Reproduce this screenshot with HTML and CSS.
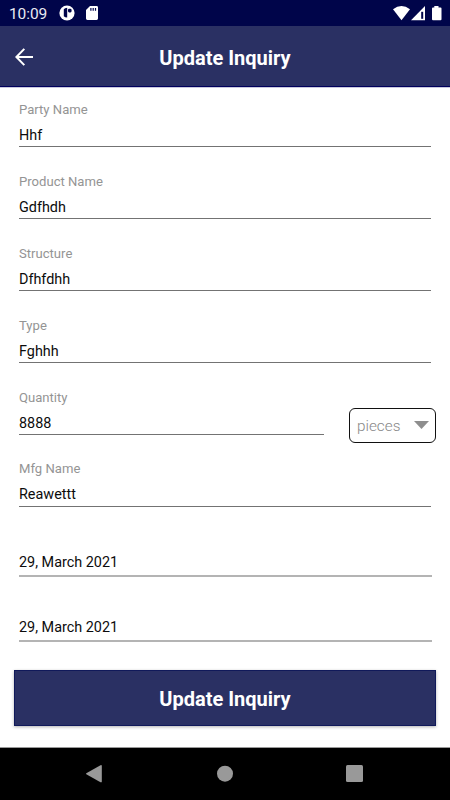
FILE: index.html
```html
<!DOCTYPE html>
<html lang="en">
<head>
<meta charset="utf-8">
<title>Update Inquiry</title>
<link rel="stylesheet" href="styles.css">
</head>
<body>
<div class="status">
  <span class="clock">10:09</span>
  <svg class="app-icon" width="16" height="16" viewBox="0 0 16 16"><circle cx="8" cy="8" r="7.6" fill="#fff"/><path d="M4.800 4.200q1-1.300 3.400-1.500v9.800q-2.200 0-3.400-1.300z" fill="#00054a"/><rect x="9" y="3.800" width="3.600" height="3.600" rx="1.300" fill="#00054a"/></svg>
  <svg class="sd-icon" width="12" height="14" viewBox="0 0 12 14"><path d="M4 0h6.600Q12 0 12 1.400v11.200q0 1.400-1.400 1.400H1.400Q0 14 0 12.600V4z" fill="#fff"/><path d="M4.300 2h1.200v2.700H4.300zM6.600 2h1.200v2.700H6.600zM8.900 2h1.200v2.700H8.900z" fill="#00054a"/></svg>
  <svg class="signals" width="50" height="15" viewBox="0 0 50 15"><path d="M0 3.300Q8.500-3.300 17 3.300L8.500 14.200z" fill="#fff"/><path d="M18 14.200 32 0v14.200z" fill="#fff"/><path d="M28.200 5.800h2v7h-2z" fill="#00054a"/><path d="M41.300 0h4.200v1.400h2q1 0 1 1v10.800q0 1-1 1h-7.500q-1 0-1-1V2.400q0-1 1-1h1.300z" fill="#fff"/></svg>
</div>
<header class="header">
  <svg class="back" width="18" height="18" viewBox="0 0 18 18"><path d="M9.300.9 1.400 9l7.900 8.100M1.400 9H18" fill="none" stroke="#fff" stroke-width="2"/></svg>
  <h1 class="title">Update Inquiry</h1>
</header>
<main class="form">
  <div class="field"><div class="label">Party Name</div><div class="value">Hhf</div></div>
  <div class="field"><div class="label">Product Name</div><div class="value">Gdfhdh</div></div>
  <div class="field"><div class="label">Structure</div><div class="value">Dfhfdhh</div></div>
  <div class="field"><div class="label">Type</div><div class="value">Fghhh</div></div>
  <div class="row">
    <div class="field quantity"><div class="label">Quantity</div><div class="value">8888</div></div>
    <div class="unit"><span>pieces</span><svg width="15" height="8" viewBox="0 0 15 8"><path d="M0 0h15L7.500 8z" fill="#8e8e8e"/></svg></div>
  </div>
  <div class="field"><div class="label">Mfg Name</div><div class="value">Reawettt</div></div>
  <div class="date first">29, March 2021</div>
  <div class="date">29, March 2021</div>
  <div class="submit">Update Inquiry</div>
</main>
<nav class="nav">
  <svg width="450" height="52" viewBox="0 0 450 52" fill="#999"><path d="M86.300 25.200 100.500 17.200q1.300-.5 1.300.8v15.400q0 1.300-1.300.8L86.300 26.200q-.6-.5 0-1z"/><circle cx="225" cy="25.700" r="8"/><rect x="346" y="17" width="17" height="17" rx="1.500"/></svg>
</nav>
</body>
</html>
```
FILE: styles.css
```css
* {
  box-sizing: border-box;
}

body {
  margin: 0;
  width: 450px;
  height: 800px;
  display: flex;
  flex-direction: column;
  overflow: hidden;
  background: #fff;
  color: #0c0c0c;
  font-family: Roboto, "Liberation Sans", sans-serif;
}

.status {
  height: 26px;
  flex: none;
  display: flex;
  align-items: center;
  padding: 0 7px 0 9px;
  background: #00054a;
}

.clock {
  width: 50px;
  color: #e9eaf2;
  font-size: 15.500px;
  letter-spacing: -.1px;
  line-height: 20px;
  padding-top: 2px;
}

.sd-icon {
  margin-left: 11px;
}

.signals {
  margin-left: auto;
}

.header {
  height: 61px;
  flex: none;
  display: grid;
  grid-template-columns: 45px 1fr 45px;
  align-items: center;
  background: #2a3063;
  border-bottom: 1px solid #00005c;
  box-shadow: 0 1px 0 #c9c9dd;
}

.back {
  margin: 2px 0 0 15px;
}

.title {
  margin: 3px 0 0;
  color: #fff;
  font-size: 20px;
  font-weight: 700;
  line-height: 24px;
  text-align: center;
}

.form {
  flex: 1;
  padding: 13px 14px 0;
}

.field {
  height: 47.400px;
  margin: 0 5px 24.500px;
  border-bottom: 1px solid #737373;
}

.label {
  color: #949494;
  font-size: 13.100px;
  line-height: 19px;
}

.value {
  padding-top: 6px;
  font-size: 14.400px;
  line-height: 22px;
}

.row {
  display: flex;
}

.quantity {
  width: 305px;
}

.unit {
  width: 87px;
  height: 35px;
  margin: 20px 0 0 20px;
  padding: 1px 6px 0 7px;
  display: flex;
  align-items: center;
  justify-content: space-between;
  border: 1px solid #111;
  border-radius: 6px;
  color: #888;
  font-size: 15.300px;
  font-weight: 300;
}

.unit svg {
  margin-top: -1px;
}

.date {
  height: 27px;
  margin: 0 4px 38px 5px;
  border-bottom: 2px solid #b4b4b4;
  font-size: 14.400px;
  line-height: 25px;
}

.first {
  margin-top: 43.500px;
}

.submit {
  height: 56px;
  margin-top: -10px;
  background: #2a3063;
  border: 1px solid #10195a;
  box-shadow: 0 1px 3px rgba(0, 0, 0, .3);
  color: #fff;
  font-size: 20px;
  font-weight: 700;
  line-height: 56px;
  text-align: center;
}

.nav {
  height: 53px;
  flex: none;
  background: #000;
  border-top: 1px solid #999;
}
```
